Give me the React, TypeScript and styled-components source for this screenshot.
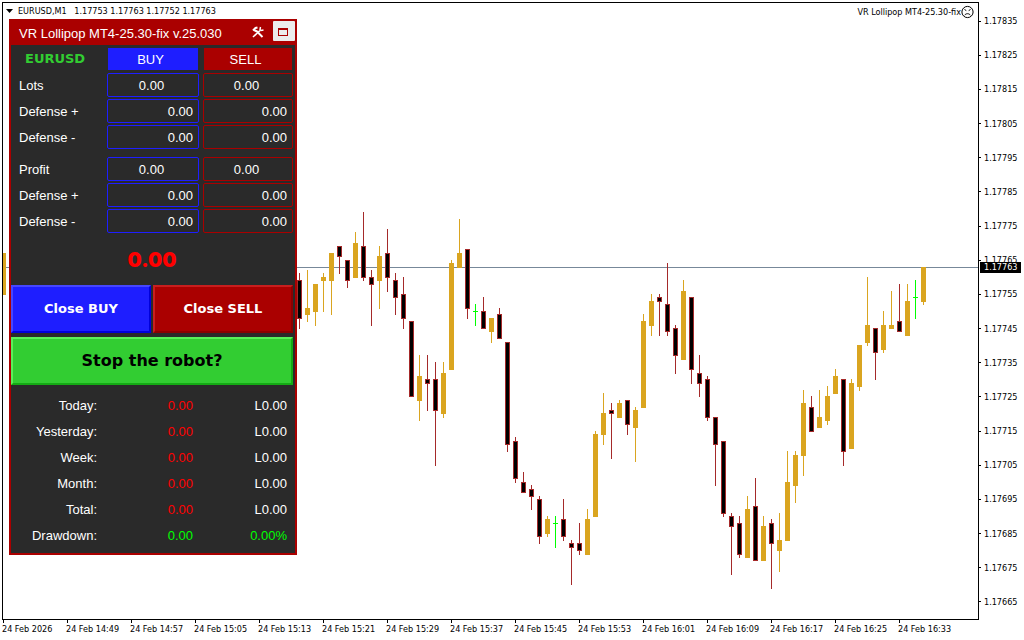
import React from 'react';
import styled, { createGlobalStyle, css } from 'styled-components';

const color = {
  red: '#aa0000',
  blue: '#1e1eff',
  green: '#32cd32',
  panel: '#2a2a2a',
  gold: '#daa520',
  bear: '#a52a2a',
  doji: '#00ff00',
  priceLine: '#778899',
};

const chartFont = '"DejaVu Sans Condensed", "DejaVu Sans", sans-serif';
const panelFont = '"Liberation Sans", Arial, sans-serif';
const heavyFont = '"DejaVu Sans", sans-serif';

const GlobalStyle = createGlobalStyle`
  *, *::before, *::after { box-sizing: border-box; }
  body { margin: 0; background: #fff; color: #000; }
  button, input { font: inherit; color: inherit; margin: 0; }
`;

/* ---------- chart ---------- */

const Page = styled.main`
  display: grid;
  grid-template-columns: minmax(0, 1fr) 45px;
  grid-template-rows: 1fr 20px;
  min-height: 100vh;
  padding: 2px 0 0 2px;
  font: 9px/12px ${chartFont};
`;

const Plot = styled.section`
  position: relative;
  border: 1px solid #000;
  padding: 0 4px 0 3px;
  display: flex;
  justify-content: space-between;
  align-items: flex-start;
  min-height: 617px;
`;

const Drawing = styled.svg`
  position: absolute;
  inset: 0;
  width: 100%;
  height: 100%;
`;

const Caption = styled.div`
  position: relative;
  display: flex;
  align-items: center;
  white-space: pre;
  height: ${(p: { $tall?: boolean }) => (p.$tall ? 18 : 16)}px;
  gap: ${(p: { $tall?: boolean }) => (p.$tall ? 0 : 5)}px;
`;

const PriceAxis = styled.div`
  position: relative;
  display: flex;
  flex-direction: column;
  justify-content: space-between;
  padding: 13px 0 12px;
`;

const PriceMark = styled.div`
  display: flex;
  align-items: center;
  gap: 3px;
  height: 12px;
  &::before {
    content: '';
    width: 2px;
    height: 1px;
    background: #000;
  }
`;

const CurrentPrice = styled.div`
  position: absolute;
  top: 260px;
  left: 1px;
  width: 41px;
  height: 11px;
  padding-left: 4px;
  line-height: 11px;
  background: #000;
  color: #fff;
`;

const TimeAxis = styled.div`
  grid-column: 1 / -1;
  display: flex;
  overflow: hidden;
`;

const TimeMark = styled.div`
  flex: 0 0 64px;
  white-space: nowrap;
  &::before {
    content: '';
    display: block;
    width: 1px;
    height: 3px;
    margin-left: 1px;
    background: #000;
  }
`;

/* ---------- trading panel ---------- */

const Panel = styled.aside`
  position: absolute;
  left: 6px;
  top: 16px;
  width: 288px;
  border: 2px solid ${color.red};
  background: ${color.panel};
  color: #fff;
  font: 13px/16px ${panelFont};
`;

const TitleBar = styled.header`
  display: flex;
  align-items: center;
  height: 24px;
  padding-left: 8px;
  background: ${color.red};
`;

const Title = styled.h1`
  flex: 1;
  margin: 0;
  padding-top: 2px;
  font: inherit;
  white-space: nowrap;
`;

const IconButton = styled.button<{ $light?: boolean }>`
  display: grid;
  place-items: center;
  width: 22px;
  height: 20px;
  margin: 0 0 4px 3px;
  padding: 2px 3px 0 0;
  border: 0;
  border-radius: 1px;
  background: ${(p) => (p.$light ? '#ececec' : 'transparent')};
`;

const Grid = styled.div`
  display: grid;
  grid-template-columns: 92px 92px 90px;
  column-gap: 4px;
  row-gap: 2px;
  padding: 2px 2px 0 0;
`;

const Symbol = styled.div`
  padding-left: 14px;
  font: bold 13px/24px ${heavyFont};
  color: ${color.green};
`;

const SideButton = styled.button<{ $side: string }>`
  height: 24px;
  padding: 2px 5px 0 0;
  border: 1px solid transparent;
  background: ${(p) => p.$side} padding-box;
`;

const RowLabel = styled.label<{ $spaced?: boolean }>`
  padding-left: 8px;
  height: 24px;
  line-height: 26px;
  margin-top: ${(p) => (p.$spaced ? 6 : 0)}px;
`;

const Field = styled.input<{ $side: string; $center?: boolean; $spaced?: boolean }>`
  width: 100%;
  height: 24px;
  margin-top: ${(p) => (p.$spaced ? 6 : 0)}px;
  padding: 0 5px;
  border: 1px solid ${(p) => p.$side};
  border-radius: 2px;
  background: transparent;
  text-align: right;
  outline: none;
  ${(p) => p.$center && css`padding: 0 3px 0 0; text-align: center;`}
`;

const Balance = styled.output`
  display: block;
  height: 52px;
  padding-right: 2px;
  text-align: center;
  font: 900 20px/54px Inter, ${heavyFont};
  color: #ff0000;
`;

const Actions = styled.div`
  display: grid;
  grid-template-columns: 1fr 1fr;
  gap: 4px 2px;
  padding-right: 2px;
`;

const tones = {
  blue: { bg: color.blue, fg: '#fff', hi: '#4646ff', lo: '#0000dc' },
  red: { bg: color.red, fg: '#fff', hi: '#c81e1e', lo: '#8c0000' },
  green: { bg: color.green, fg: '#000', hi: '#5af05a', lo: '#14aa14' },
};

const ActionButton = styled.button<{ $tone: keyof typeof tones; $wide?: boolean }>`
  height: 48px;
  padding: 0;
  border: 2px solid;
  border-color: ${(p) => `${tones[p.$tone].hi} ${tones[p.$tone].lo} ${tones[p.$tone].lo} ${tones[p.$tone].hi}`};
  background: ${(p) => tones[p.$tone].bg};
  color: ${(p) => tones[p.$tone].fg};
  font: bold ${(p) => (p.$wide ? 16 : 13)}px/20px ${heavyFont};
  grid-column: ${(p) => (p.$wide ? '1 / -1' : 'auto')};
`;

const Summary = styled.table`
  width: 282px;
  margin: 8px 0 4px;
  border-collapse: collapse;
  table-layout: fixed;
  text-align: right;
`;

const SummaryCell = styled.td<{ $color?: string }>`
  height: 26px;
  padding: 0 6px 0 0;
  font-weight: normal;
  color: ${(p) => p.$color || '#fff'};
`;

/* ---------- data ---------- */

type Kind = 'up' | 'down' | 'doji';
// kind, high, body top, body bottom, low
type Candle = [Kind, number, number, number, number];

const candles: Candle[] = [
  ['down', 273, 280, 319, 329], ['up', 270, 308, 315, 322], ['up', 284, 284, 312, 326],
  ['up', 273, 277, 281, 312], ['up', 253, 253, 281, 315], ['down', 246, 246, 257, 274],
  ['down', 260, 260, 281, 288], ['up', 232, 243, 278, 278], ['down', 212, 246, 278, 281],
  ['down', 270, 277, 285, 326], ['up', 246, 256, 281, 309], ['down', 229, 253, 278, 292],
  ['down', 273, 280, 298, 315], ['down', 277, 294, 319, 329], ['down', 321, 321, 397, 397],
  ['up', 355, 376, 401, 421], ['down', 355, 379, 384, 411], ['down', 362, 379, 411, 466],
  ['up', 362, 373, 414, 418], ['up', 260, 263, 370, 370], ['up', 219, 253, 268, 268],
  ['down', 249, 249, 309, 319], ['doji', 304, 311, 312, 326], ['down', 297, 311, 329, 329],
  ['up', 318, 318, 332, 343], ['down', 308, 314, 339, 339], ['down', 342, 342, 445, 452],
  ['down', 437, 441, 479, 483], ['down', 472, 482, 493, 493], ['down', 485, 489, 497, 510],
  ['down', 496, 499, 537, 544], ['up', 516, 519, 534, 537], ['doji', 516, 523, 524, 548],
  ['down', 499, 519, 537, 541], ['down', 540, 543, 548, 585], ['down', 523, 543, 551, 555],
  ['up', 509, 519, 555, 555], ['up', 431, 434, 517, 517], ['up', 393, 413, 435, 445],
  ['down', 403, 410, 414, 459], ['up', 400, 403, 418, 418], ['down', 400, 400, 425, 435],
  ['up', 407, 410, 428, 462], ['up', 314, 321, 408, 408], ['up', 294, 301, 326, 336],
  ['down', 294, 297, 302, 336], ['down', 263, 304, 332, 336], ['down', 325, 328, 356, 374],
  ['up', 280, 291, 360, 360], ['down', 297, 297, 370, 384], ['down', 355, 373, 384, 397],
  ['down', 376, 379, 418, 421], ['down', 417, 417, 445, 486], ['down', 441, 441, 514, 517],
  ['down', 513, 516, 527, 575], ['down', 516, 523, 555, 558], ['up', 496, 509, 558, 558],
  ['down', 478, 506, 561, 561], ['up', 516, 526, 561, 561], ['down', 519, 523, 544, 589],
  ['up', 513, 540, 551, 572], ['up', 451, 482, 541, 541], ['up', 451, 455, 486, 503],
  ['up', 390, 403, 456, 476], ['down', 396, 407, 432, 432], ['up', 390, 417, 428, 428],
  ['up', 386, 396, 421, 425], ['up', 369, 376, 394, 394], ['down', 379, 379, 452, 466],
  ['up', 379, 383, 449, 449], ['up', 345, 345, 387, 391], ['up', 277, 325, 343, 346],
  ['down', 328, 328, 353, 380], ['up', 311, 325, 350, 353], ['up', 291, 325, 329, 329],
  ['down', 284, 321, 332, 332], ['up', 284, 301, 336, 336], ['doji', 280, 297, 298, 319],
  ['up', 267, 267, 302, 305],
];

const times = [
  '2026', '14:49', '14:57', '15:05', '15:13', '15:21', '15:29', '15:37',
  '15:45', '15:53', '16:01', '16:09', '16:17', '16:25', '16:33',
];
const prices = Array.from({ length: 18 }, (_, i) => ((117835 - i * 10) / 100000).toFixed(5));

const fieldRows = [
  { label: 'Lots', center: true },
  { label: 'Defense +' },
  { label: 'Defense -' },
  { label: 'Profit', center: true, spaced: true },
  { label: 'Defense +' },
  { label: 'Defense -' },
];

const summaryRows = ['Today:', 'Yesterday:', 'Week:', 'Month:', 'Total:'];

const candleColor = { up: color.gold, down: color.bear, doji: color.doji };

function CandleShape({ x, candle }: { x: number; candle: Candle }) {
  const [kind, high, top, bottom, low] = candle;
  const stroke = candleColor[kind];
  return (
    <g fill={stroke}>
      <rect x={x} y={high} width={1} height={low - high} />
      <rect x={x - 2} y={top} width={5} height={bottom - top} />
      {kind === 'down' && <rect x={x - 1} y={top + 1} width={3} height={bottom - top - 2} fill="#000" />}
    </g>
  );
}

function Candles() {
  return (
    <Drawing aria-hidden="true" shapeRendering="crispEdges">
      <g transform="translate(0 -3)">
        <rect x="0" y="267" width="100%" height="1" fill={color.priceLine} />
        <CandleShape x={0} candle={['up', 253, 253, 295, 295]} />
        {candles.map((c, i) => (
          <CandleShape key={i} x={296 + i * 8} candle={c} />
        ))}
      </g>
    </Drawing>
  );
}

function ToolsIcon() {
  return (
    <svg width="12" height="12" viewBox="0 0 12 12" fill="none" stroke="#fff" aria-hidden="true">
      <path d="M4 4.5 10.5 11" strokeWidth="2" />
      <path d="M1 4.5 3.5 2 5.5 1.5M2 3.5 4 5.5" strokeWidth="2" />
      <path d="M1 11 8 4.5" strokeWidth="1.6" />
      <path d="M8.5 1 8 3.5 9 4.5 11.5 4" strokeWidth="1.4" />
    </svg>
  );
}

function WindowIcon() {
  return (
    <svg width="10" height="8" viewBox="0 0 10 8" fill="none" shapeRendering="crispEdges" aria-hidden="true">
      <path d="M.5 .5h9v7h-9z" stroke={color.red} />
      <path d="M0 1h10" stroke={color.red} strokeWidth="2" />
    </svg>
  );
}

function SadFace() {
  return (
    <svg width="13" height="14" viewBox="0 0 13 14" fill="none" stroke="#000" aria-hidden="true">
      <circle cx="6.5" cy="7" r="5.6" />
      <path d="M3.8 10.2c.8-2 4.6-2 5.4 0" />
      <path d="M3.5 4.5 5.3 5.6M9.5 4.5 7.7 5.6" />
    </svg>
  );
}

export default function App() {
  return (
    <>
      <GlobalStyle />
      <Page>
        <Plot>
          <Candles />
          <Caption>
            <svg width="7" height="4" viewBox="0 0 7 4" aria-hidden="true">
              <path d="M0 0h7L3.5 4z" />
            </svg>
            <span>EURUSD,M1</span>
            {' 1.17753 1.17763 1.17752 1.17763'}
          </Caption>
          <Caption $tall>
            VR Lollipop MT4-25.30-fix
            <SadFace />
          </Caption>
          <Panel>
            <TitleBar>
              <Title>VR Lollipop MT4-25.30-fix v.25.030</Title>
              <IconButton aria-label="Settings"><ToolsIcon /></IconButton>
              <IconButton aria-label="Minimize" $light><WindowIcon /></IconButton>
            </TitleBar>
            <Grid>
              <Symbol>EURUSD</Symbol>
              <SideButton $side={color.blue}>BUY</SideButton>
              <SideButton $side={color.red}>SELL</SideButton>
              {fieldRows.map((row, i) => (
                <React.Fragment key={i}>
                  <RowLabel htmlFor={`buy-${i}`} $spaced={row.spaced}>{row.label}</RowLabel>
                  <Field id={`buy-${i}`} defaultValue="0.00" $side={color.blue} $center={row.center} $spaced={row.spaced} />
                  <Field
                    aria-label={`${row.label} sell`}
                    defaultValue="0.00"
                    $side={color.red}
                    $center={row.center}
                    $spaced={row.spaced}
                  />
                </React.Fragment>
              ))}
            </Grid>
            <Balance>0.00</Balance>
            <Actions>
              <ActionButton $tone="blue">Close BUY</ActionButton>
              <ActionButton $tone="red">Close SELL</ActionButton>
              <ActionButton $tone="green" $wide>Stop the robot?</ActionButton>
            </Actions>
            <Summary>
              <colgroup>
                <col style={{ width: 92 }} />
                <col style={{ width: 96 }} />
                <col />
              </colgroup>
              <tbody>
                {summaryRows.map((label) => (
                  <tr key={label}>
                    <SummaryCell as="th" scope="row">{label}</SummaryCell>
                    <SummaryCell $color="#ff0000">0.00</SummaryCell>
                    <SummaryCell>L0.00</SummaryCell>
                  </tr>
                ))}
                <tr>
                  <SummaryCell as="th" scope="row">Drawdown:</SummaryCell>
                  <SummaryCell $color={color.doji}>0.00</SummaryCell>
                  <SummaryCell $color={color.doji}>0.00%</SummaryCell>
                </tr>
              </tbody>
            </Summary>
          </Panel>
        </Plot>
        <PriceAxis>
          {prices.map((p) => (
            <PriceMark key={p}>{p}</PriceMark>
          ))}
          <CurrentPrice>1.17763</CurrentPrice>
        </PriceAxis>
        <TimeAxis>
          {times.map((t) => (
            <TimeMark key={t}>24 Feb {t}</TimeMark>
          ))}
        </TimeAxis>
      </Page>
    </>
  );
}
